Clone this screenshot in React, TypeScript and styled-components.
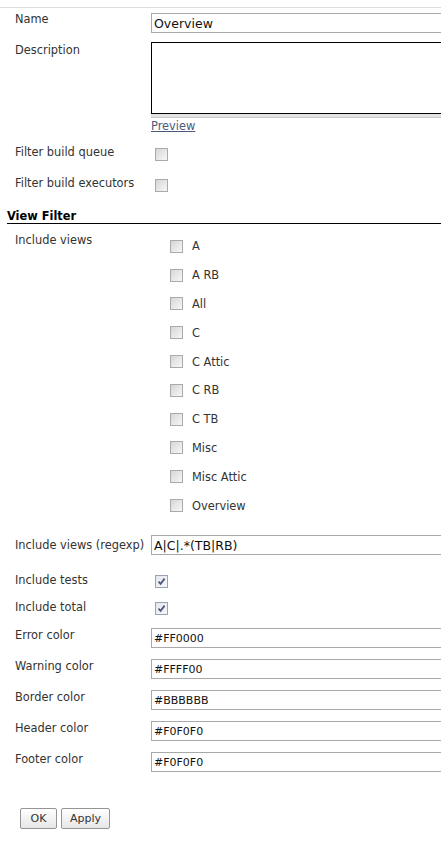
import styled, { createGlobalStyle } from "styled-components";

const GlobalStyle = createGlobalStyle`
  html, body {
    margin: 0;
    padding: 0;
    background: #fff;
    overflow: hidden;
  }
  body {
    font-family: "DejaVu Sans", Verdana, sans-serif;
    font-size: 11.4px;
    color: #333;
  }
`;

const views = [
  { name: "A" },
  { name: "A RB" },
  { name: "All" },
  { name: "C" },
  { name: "C Attic" },
  { name: "C RB" },
  { name: "C TB" },
  { name: "Misc" },
  { name: "Misc Attic" },
  { name: "Overview" },
];

const colors = [
  { label: "Error color", value: "#FF0000" },
  { label: "Warning color", value: "#FFFF00" },
  { label: "Border color", value: "#BBBBBB" },
  { label: "Header color", value: "#F0F0F0" },
  { label: "Footer color", value: "#F0F0F0" },
];

function Checkbox({ checked }: { checked?: boolean }) {
  return (
    <Box $checked={checked}>
      {checked && (
        <svg width="9" height="9" viewBox="0 0 9 9">
          <path d="M1.5 4.6 L3.6 6.8 L7.6 1.6" fill="none" stroke="#4b5a7c" strokeWidth="1.8" />
        </svg>
      )}
    </Box>
  );
}

function App(): JSX.Element {
  return (
    <Page>
      <GlobalStyle />
      <TopRule />
      <Form>
        <Row $h={31}>
          <Label $top={1}>Name</Label>
          <Field $top={2}>
            <TextInput defaultValue="Overview" />
          </Field>
        </Row>
        <Row $h={102}>
          <Label $top={1}>Description</Label>
          <Field>
            <TextArea />
            <Grip />
            <PreviewLink href="#">Preview</PreviewLink>
          </Field>
        </Row>
        <Row $h={31}>
          <Label $top={1}>Filter build queue</Label>
          <Field $top={4} $indent={4}>
            <Checkbox />
          </Field>
        </Row>
        <Row $h={31}>
          <Label $top={1}>Filter build executors</Label>
          <Field $top={4} $indent={4}>
            <Checkbox />
          </Field>
        </Row>

        <SectionTitle>View Filter</SectionTitle>

        <Row $h={303}>
          <Label $top={1}>Include views</Label>
          <Field $indent={19}>
            {views.map((view) => (
              <ViewItem key={view.name}>
                <Checkbox />
                <ViewName>{view.name}</ViewName>
              </ViewItem>
            ))}
          </Field>
        </Row>
        <Row $h={37}>
          <Label $top={3}>Include views (regexp)</Label>
          <Field>
            <TextInput defaultValue="A|C|.*(TB|RB)" />
          </Field>
        </Row>
        <Row $h={27}>
          <Label $top={1}>Include tests</Label>
          <Field $top={3} $indent={4}>
            <Checkbox checked />
          </Field>
        </Row>
        <Row $h={28}>
          <Label $top={1}>Include total</Label>
          <Field $top={3} $indent={4}>
            <Checkbox checked />
          </Field>
        </Row>
        {colors.map((c) => (
          <Row $h={31} key={c.label}>
            <Label $top={1}>{c.label}</Label>
            <Field $top={1}>
              <ColorInput defaultValue={c.value} />
            </Field>
          </Row>
        ))}
      </Form>
      <Buttons>
        <Button>OK</Button>
        <Button>Apply</Button>
      </Buttons>
    </Page>
  );
}

export default App;

const Page = styled.div`
  width: 441px;
  height: 847px;
  overflow: hidden;
`;

const TopRule = styled.div`
  margin-top: 7px;
  border-top: 1px solid #dedede;
`;

const Form = styled.div`
  padding-top: 3px;
`;

const Row = styled.div<{ $h: number }>`
  display: grid;
  grid-template-columns: 136px 1fr;
  padding-left: 15px;
  height: ${(p) => p.$h}px;
`;

const Label = styled.div<{ $top?: number }>`
  padding-top: ${(p) => p.$top ?? 0}px;
  line-height: 14px;
  white-space: nowrap;
  color: #333;
`;

const Field = styled.div<{ $top?: number; $indent?: number }>`
  padding-top: ${(p) => p.$top ?? 0}px;
  padding-left: ${(p) => p.$indent ?? 0}px;
  min-width: 0;
`;

const TextInput = styled.input`
  box-sizing: border-box;
  display: block;
  width: 330px;
  height: 20px;
  margin: 0;
  padding: 0 2px;
  border: 1px solid #a9a9a9;
  font-family: "DejaVu Sans", Verdana, sans-serif;
  font-size: 12.5px;
  color: #111;
  background: #fff;
  outline: none;
`;

const ColorInput = styled(TextInput)`
  font-size: 11px;
`;

const TextArea = styled.textarea`
  box-sizing: border-box;
  display: block;
  width: 330px;
  height: 72px;
  margin: 0;
  padding: 2px;
  border: 1px solid #000;
  resize: none;
  font-family: "DejaVu Sans", Verdana, sans-serif;
  outline: none;
`;

const Grip = styled.div`
  width: 330px;
  height: 3px;
  background: #e4e4e4;
  border-bottom: 1px solid #c9c9c9;
`;

const PreviewLink = styled.a`
  display: inline-block;
  margin-top: 1px;
  line-height: 14px;
  color: #4a5a7d;
  text-decoration: underline;
`;

const Box = styled.span<{ $checked?: boolean }>`
  box-sizing: border-box;
  display: inline-flex;
  align-items: center;
  justify-content: center;
  width: 13px;
  height: 13px;
  border: 1px solid ${(p) => (p.$checked ? "#9aa3b3" : "#aaaaaa")};
  background: ${(p) =>
    p.$checked
      ? "linear-gradient(135deg, #e4e7ec, #f6f7f9)"
      : "linear-gradient(135deg, #d6d6d6, #f7f7f7)"};
  vertical-align: top;
`;

const SectionTitle = styled.div`
  margin: 4px 0 8px 7px;
  line-height: 13px;
  font-weight: bold;
  color: #000;
  border-bottom: 1px solid #000;
`;

const ViewItem = styled.div`
  display: flex;
  align-items: center;
  gap: 9px;
  height: 28.8px;
`;

const ViewName = styled.span`
  color: #333;
`;

const Buttons = styled.div`
  display: flex;
  gap: 4px;
  margin-top: 26px;
  padding-left: 20px;
`;

const Button = styled.button`
  box-sizing: border-box;
  height: 21px;
  min-width: 37px;
  padding: 0 8px;
  border: 1px solid #959595;
  border-radius: 2px;
  background: linear-gradient(#ffffff, #e6e6e6);
  font-family: "DejaVu Sans", Verdana, sans-serif;
  font-size: 11px;
  color: #333;
`;
